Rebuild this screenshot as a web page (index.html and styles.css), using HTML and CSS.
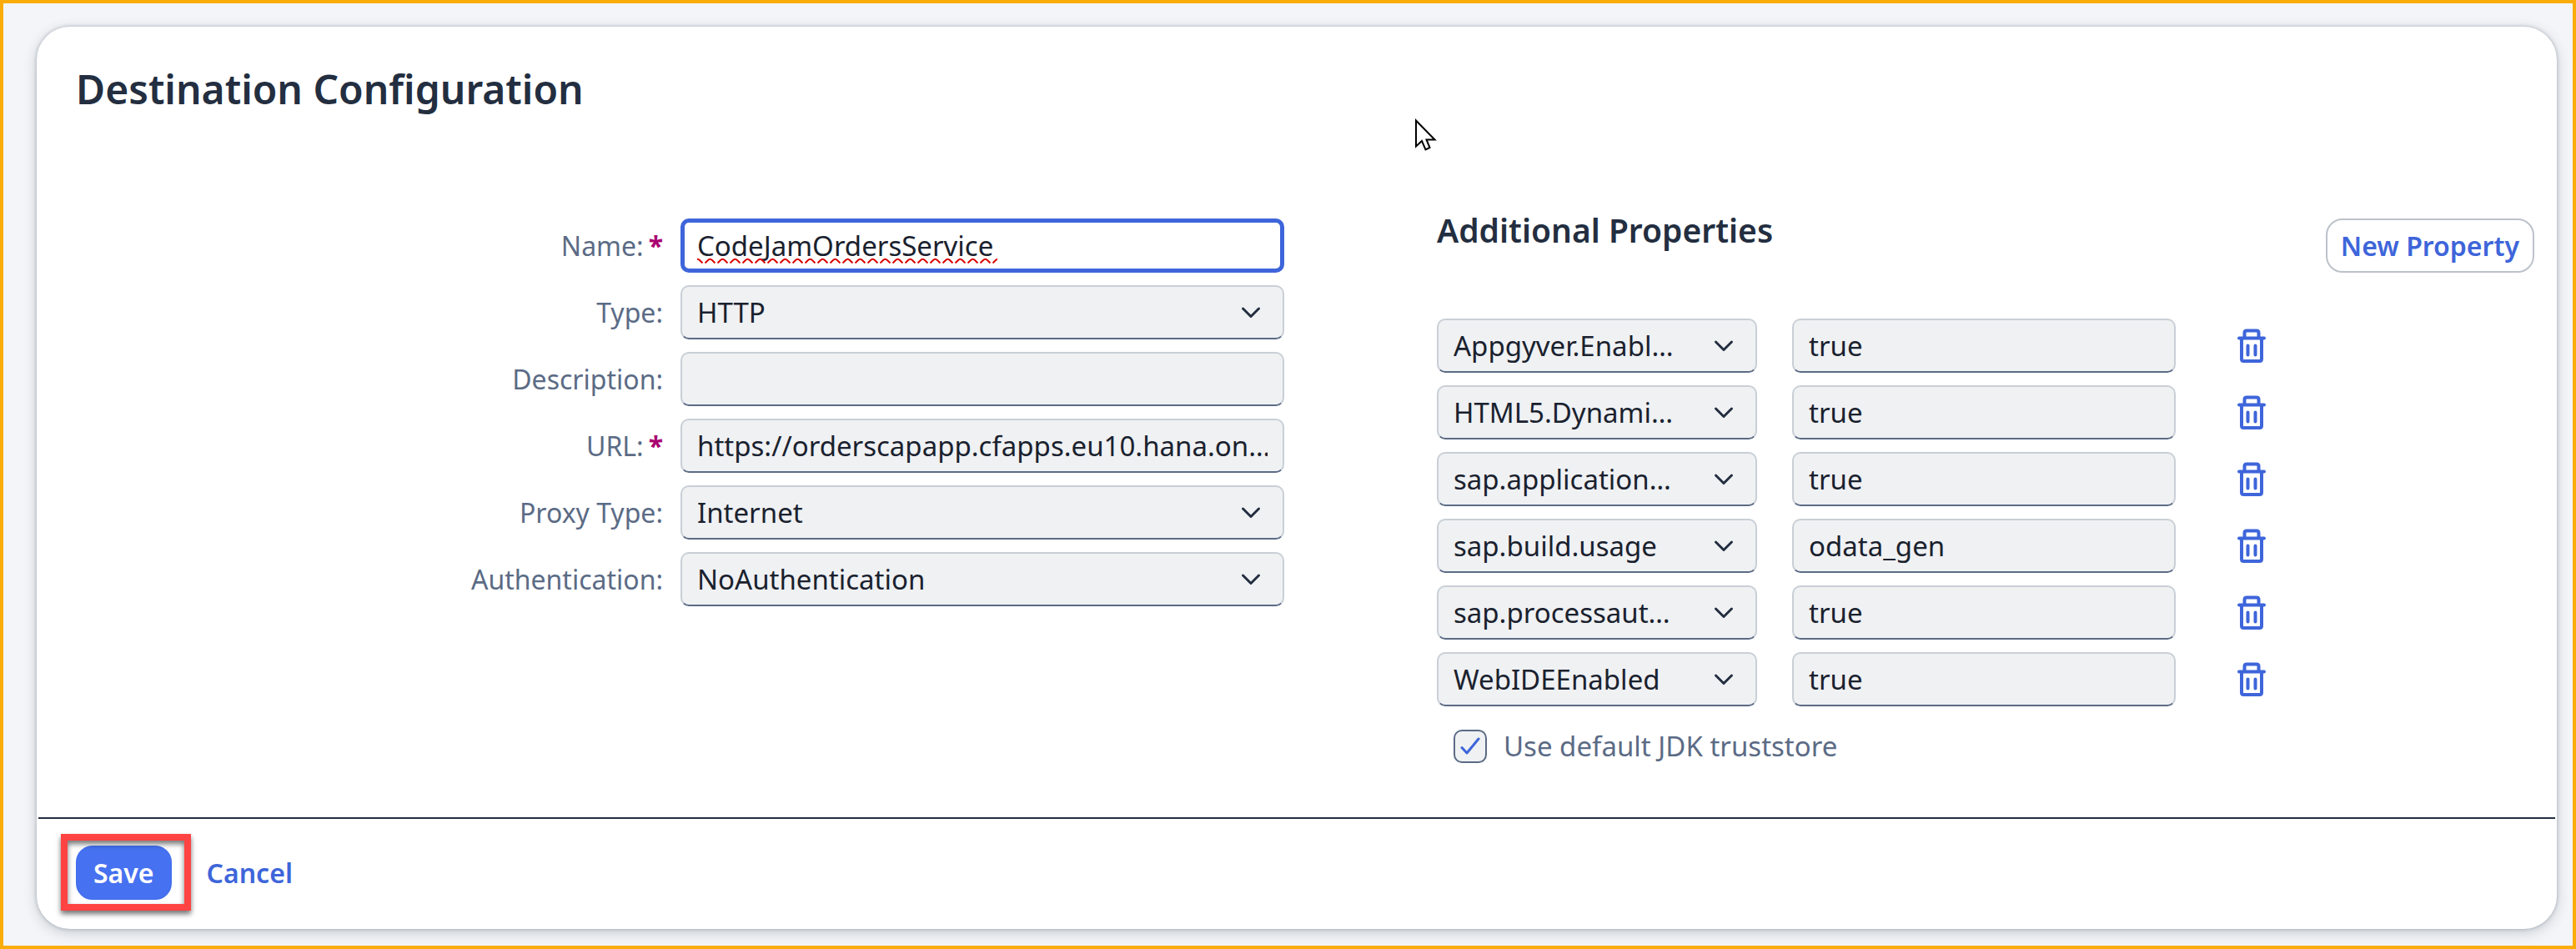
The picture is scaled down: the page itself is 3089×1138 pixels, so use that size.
FILE: index.html
```html
<!DOCTYPE html>
<html lang="en">
<head>
  <meta charset="utf-8">
  <meta name="viewport" content="width=device-width, initial-scale=1">
  <title>Destination Configuration</title>
  <link rel="stylesheet" href="styles.css">
</head>
<body>
  <svg class="sprite" aria-hidden="true">
    <symbol id="chevron" viewBox="0 0 24 16"><path d="M2.5 3 12 12.5 21.5 3" fill="none" stroke="currentColor" stroke-width="3" stroke-linecap="round" stroke-linejoin="round"/></symbol>
    <symbol id="trash" viewBox="0 0 36 42"><path d="M3 11.5H33M9.5 11V5Q9.500 2.500 12 2.500H24Q26.500 2.500 26.500 5V11M6 12V36.500Q6 39 8.500 39H27.500Q30 39 30 36.500V12M13.500 20.500V31.500M22.500 20.500V31.500" fill="none" stroke="currentColor" stroke-width="4" stroke-linecap="round"/></symbol>
  </svg>

  <main class="card">
    <h1 class="title">Destination Configuration</h1>

    <form class="config" id="config">
      <section class="settings">
        <label class="label" for="name">Name:<span class="required">*</span></label>
        <div class="control">
          <input class="field field-focused" id="name" type="text" value="CodeJamOrdersService" spellcheck="false" required>
          <svg class="squiggle" aria-hidden="true">
            <defs><pattern id="wave" width="15" height="7" patternUnits="userSpaceOnUse" x="-7"><path d="M1.500 6.500 5 3Q7.500 0.500 10 3L13.500 6.500" fill="none" stroke="#d90404" stroke-width="2"/></pattern></defs>
            <rect width="100%" height="7" fill="url(#wave)"/>
          </svg>
        </div>

        <label class="label" for="type">Type:</label>
        <div class="control">
          <select class="field" id="type"><option>HTTP</option></select>
          <svg class="chevron" aria-hidden="true"><use href="#chevron"/></svg>
        </div>

        <label class="label" for="description">Description:</label>
        <div class="control"><input class="field" id="description" type="text"></div>

        <label class="label" for="url">URL:<span class="required">*</span></label>
        <div class="control"><input class="field" id="url" type="text" value="https://orderscapapp.cfapps.eu10.hana.on…" required></div>

        <label class="label" for="proxy">Proxy Type:</label>
        <div class="control">
          <select class="field" id="proxy"><option>Internet</option></select>
          <svg class="chevron" aria-hidden="true"><use href="#chevron"/></svg>
        </div>

        <label class="label" for="auth">Authentication:</label>
        <div class="control">
          <select class="field" id="auth"><option>NoAuthentication</option></select>
          <svg class="chevron" aria-hidden="true"><use href="#chevron"/></svg>
        </div>
      </section>

      <section class="properties">
        <header class="properties-header">
          <h2 class="subtitle">Additional Properties</h2>
          <button class="button button-outline" type="button">New Property</button>
        </header>

        <div class="property">
          <div class="control"><select class="field" aria-label="Property 1"><option>Appgyver.Enabl…</option></select><svg class="chevron" aria-hidden="true"><use href="#chevron"/></svg></div>
          <input class="field" type="text" value="true" aria-label="Value 1">
          <button class="delete" type="button" aria-label="Delete property 1"><svg class="trash" aria-hidden="true"><use href="#trash"/></svg></button>
        </div>
        <div class="property">
          <div class="control"><select class="field" aria-label="Property 2"><option>HTML5.Dynami…</option></select><svg class="chevron" aria-hidden="true"><use href="#chevron"/></svg></div>
          <input class="field" type="text" value="true" aria-label="Value 2">
          <button class="delete" type="button" aria-label="Delete property 2"><svg class="trash" aria-hidden="true"><use href="#trash"/></svg></button>
        </div>
        <div class="property">
          <div class="control"><select class="field" aria-label="Property 3"><option>sap.application…</option></select><svg class="chevron" aria-hidden="true"><use href="#chevron"/></svg></div>
          <input class="field" type="text" value="true" aria-label="Value 3">
          <button class="delete" type="button" aria-label="Delete property 3"><svg class="trash" aria-hidden="true"><use href="#trash"/></svg></button>
        </div>
        <div class="property">
          <div class="control"><select class="field" aria-label="Property 4"><option>sap.build.usage</option></select><svg class="chevron" aria-hidden="true"><use href="#chevron"/></svg></div>
          <input class="field" type="text" value="odata_gen" aria-label="Value 4">
          <button class="delete" type="button" aria-label="Delete property 4"><svg class="trash" aria-hidden="true"><use href="#trash"/></svg></button>
        </div>
        <div class="property">
          <div class="control"><select class="field" aria-label="Property 5"><option>sap.processaut…</option></select><svg class="chevron" aria-hidden="true"><use href="#chevron"/></svg></div>
          <input class="field" type="text" value="true" aria-label="Value 5">
          <button class="delete" type="button" aria-label="Delete property 5"><svg class="trash" aria-hidden="true"><use href="#trash"/></svg></button>
        </div>
        <div class="property">
          <div class="control"><select class="field" aria-label="Property 6"><option>WebIDEEnabled</option></select><svg class="chevron" aria-hidden="true"><use href="#chevron"/></svg></div>
          <input class="field" type="text" value="true" aria-label="Value 6">
          <button class="delete" type="button" aria-label="Delete property 6"><svg class="trash" aria-hidden="true"><use href="#trash"/></svg></button>
        </div>

        <div class="truststore">
          <span class="check">
            <input class="checkbox" id="truststore" type="checkbox" checked>
            <svg class="tick" viewBox="0 0 24 24" aria-hidden="true"><path d="M2 13.500 8 20 22 3" fill="none" stroke="currentColor" stroke-width="3" stroke-linecap="round" stroke-linejoin="round"/></svg>
          </span>
          <label for="truststore">Use default JDK truststore</label>
        </div>
      </section>
    </form>

    <footer class="actions">
      <span class="callout"><button class="button button-primary" type="submit" form="config">Save</button></span>
      <button class="button button-plain" type="button">Cancel</button>
    </footer>
  </main>

  <svg class="pointer" viewBox="0 0 28 40" aria-hidden="true"><path d="M2 2.500V33.500L9 27 13.500 37.500 18.500 35 14.500 25.500H24.500Z" fill="#fff" stroke="#000" stroke-width="2"/></svg>
</body>
</html>
```

FILE: styles.css
```css
* {
  box-sizing: border-box;
}

body {
  position: relative;
  min-height: 100vh;
  margin: 0;
  padding: 28px 19px 20px 40px;
  border: 4px solid #faad0a;
  background: #f4f5f8;
  color: #5b6b85;
  font: 400 33px/40px "Noto Sans", sans-serif;
}

h1,
h2 {
  margin: 0;
  color: #232e40;
  font-weight: 600;
}

input,
select,
button {
  margin: 0;
  font: inherit;
}

.sprite {
  position: absolute;
  width: 0;
  height: 0;
}

.card {
  border: 2px solid #fff;
  border-radius: 40px;
  background: #fff;
  box-shadow: 0 0 4px rgba(34, 53, 72, 0.3), 0 4px 16px rgba(34, 53, 72, 0.22);
}

.title {
  padding: 43px 45px 125px;
  font-size: 48px;
  line-height: 60px;
}

.config {
  display: grid;
  grid-template-columns: minmax(0, 1464fr) minmax(0, 1316fr);
  align-items: start;
  column-gap: 183px;
  padding: 0 25px 53px 30px;
}

.settings {
  display: grid;
  grid-template-columns: minmax(0, 719fr) minmax(0, 724fr);
  align-items: center;
  gap: 15px 21px;
}

.label {
  display: flex;
  justify-content: flex-end;
  gap: 6px;
  font-size: 32px;
}

.required {
  color: #aa0070;
  font-weight: 700;
}

.control {
  display: grid;
  align-items: center;
}

.control > * {
  grid-area: 1 / 1;
}

.field {
  width: 100%;
  height: 65px;
  padding: 0 18px;
  border: 2px solid #c9cfd6;
  border-bottom-color: #5b6b85;
  border-radius: 10px;
  outline: 0;
  background: #eff1f3;
  color: #1a212e;
  appearance: none;
}

.field-focused {
  padding: 0 15px;
  border: 5px solid #3e65da;
  background: #fff;
}

.squiggle {
  align-self: end;
  width: 360px;
  height: 7px;
  margin: 0 20px 11px;
  pointer-events: none;
}

.chevron {
  justify-self: end;
  width: 24px;
  height: 16px;
  margin-right: 28px;
  color: #232e40;
  pointer-events: none;
}

.properties {
  display: grid;
  gap: 15px;
}

.properties-header {
  display: flex;
  justify-content: space-between;
  padding-bottom: 40px;
}

.subtitle {
  font-size: 39px;
  line-height: 28px;
}

.property {
  display: grid;
  grid-template-columns: minmax(0, 384fr) minmax(0, 460fr) minmax(0, 388fr);
  column-gap: 42px;
}

.button {
  height: 65px;
  padding: 0 18px;
  border: 2px solid transparent;
  border-radius: 20px;
  background: #fff;
  color: #3e65da;
  font-size: 32px;
  font-weight: 600;
  white-space: nowrap;
}

.button-outline {
  padding: 0 16px;
  border-color: #bcc2ca;
}

.button-primary {
  padding: 0 19px;
  border-color: #4470ef;
  background: #4671f0;
  color: #fff;
}

.delete {
  display: grid;
  place-items: center;
  width: 98px;
  padding: 0;
  border: 0;
  background: none;
  color: #3e65da;
}

.trash {
  width: 36px;
  height: 42px;
}

.truststore {
  display: flex;
  align-items: center;
  gap: 20px;
  height: 65px;
  padding-left: 20px;
}

.check {
  display: grid;
  place-items: center;
}

.check > * {
  grid-area: 1 / 1;
}

.checkbox {
  width: 40px;
  height: 40px;
  border: 2px solid #5b6b85;
  border-radius: 10px;
  background: #eff1f3;
  appearance: none;
}

.tick {
  width: 24px;
  height: 24px;
  color: #3e65da;
  pointer-events: none;
}

.actions {
  display: flex;
  gap: 22px;
  padding: 32px 45px 33px;
  border-top: 2px solid #232e40;
}

.callout {
  position: relative;
}

.callout::after {
  content: "";
  position: absolute;
  inset: -14px -23px -13px -18px;
  border: 8px solid #ff4343;
  box-shadow: 0 4px 6px rgba(0, 0, 0, 0.55), inset 0 4px 6px rgba(0, 0, 0, 0.55);
  pointer-events: none;
}

.pointer {
  position: absolute;
  top: 138px;
  left: 1692px;
  width: 28px;
  height: 40px;
  pointer-events: none;
}
```
